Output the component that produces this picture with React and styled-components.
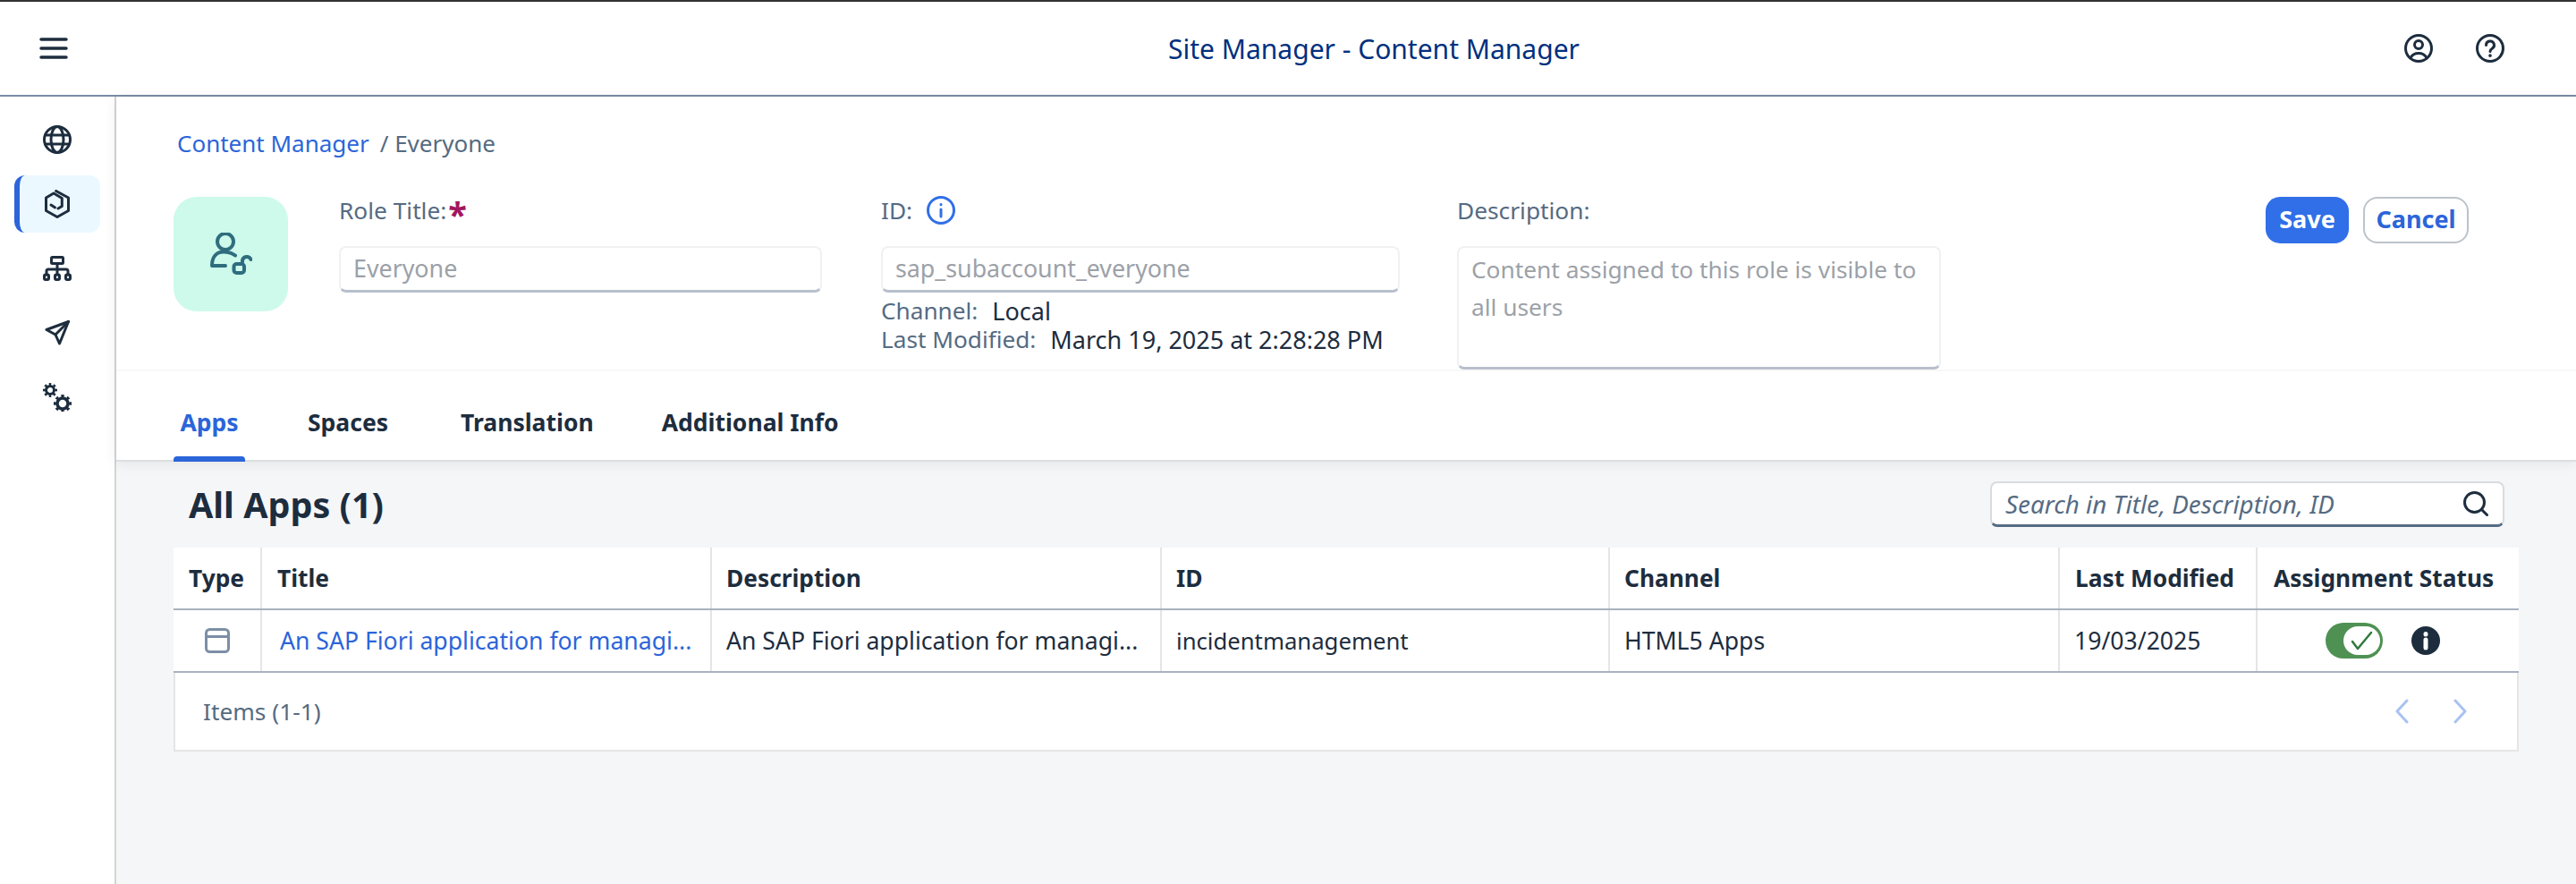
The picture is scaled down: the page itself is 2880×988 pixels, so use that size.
import styled, { createGlobalStyle } from 'styled-components'

const GlobalStyle = createGlobalStyle`
    html, body{
        margin: 0;
        padding: 0;
        background: #fff;
    }
    body{
        font-family: "Noto Sans", "Open Sans", sans-serif;
        color: #1d2d3e;
    }
    *{
        box-sizing: border-box;
    }
`

const Page = styled.div`
    width: 2880px;
    height: 988px;
    display: flex;
    flex-direction: column;
    overflow: hidden;
`

const TopBar = styled.header`
    height: 108px;
    flex: none;
    display: grid;
    grid-template-columns: 384px 1fr 192px;
    align-items: center;
    border-top: 2px solid #333;
    border-bottom: 2px solid #7a8ca6;
`

const MenuButton = styled.div`
    padding-left: 44px;
    display: flex;
`

const AppTitle = styled.h1`
    margin: 0;
    text-align: center;
    font-size: 30px;
    font-weight: 400;
    color: #00307e;
`

const TopActions = styled.div`
    display: flex;
    gap: 48px;
`

const Body = styled.div`
    flex: 1;
    display: flex;
    min-height: 0;
`

const SideNav = styled.nav`
    width: 130px;
    flex: none;
    border-right: 2px solid #d4d4d4;
    padding: 16px 16px 0;
    display: flex;
    flex-direction: column;
    gap: 8px;
`

const NavItem = styled.div`
    width: 96px;
    height: 64px;
    display: flex;
    align-items: center;
    justify-content: center;
    border-radius: 12px;
    background: ${p => p.$active ? '#ebf8ff' : 'transparent'};
    border-left: ${p => p.$active ? '6px solid #2b65d9' : '0'};
    padding-right: ${p => p.$active ? '6px' : '0'};
`

const Main = styled.main`
    flex: 1;
    display: flex;
    flex-direction: column;
    min-width: 0;
    background: #f5f6f7;
`

const Details = styled.section`
    background: #fff;
    border-bottom: 2px solid #dcdee0;
    box-shadow: 0 2px 14px rgba(0, 0, 0, .08);
    position: relative;
`

const Breadcrumb = styled.div`
    padding: 32px 64px 0 68px;
    height: 112px;
    font-size: 26px;
    line-height: 40px;
    color: #556b82;
    display: flex;
    gap: 12px;
`

const CrumbLink = styled.span`
    color: #2b65d9;
`

const HeadRow = styled.div`
    display: flex;
    padding: 0 120px 0 64px;
    height: 193px;
`

const Avatar = styled.div`
    width: 128px;
    height: 128px;
    flex: none;
    margin-right: 57px;
    border-radius: 26px;
    background: #cdfaeb;
    display: flex;
    align-items: center;
    justify-content: center;
`

const Field = styled.div`
    width: ${p => p.$width}px;
    margin-right: ${p => p.$gap}px;
    flex: none;
`

const Label = styled.label`
    height: 32px;
    display: flex;
    align-items: center;
    gap: 16px;
    margin-bottom: 23px;
    padding-bottom: 3px;
    font-size: 26.3px;
    color: #556b82;
`

const Required = styled.span`
    color: #a1175f;
    font-size: 38px;
    font-weight: 700;
    line-height: 32px;
    margin-left: -14px;
    padding-top: 8px;
`

const TextInput = styled.input`
    display: block;
    width: 100%;
    height: 52px;
    padding: 0 14px 3px;
    border: 2px solid #eff1f2;
    border-bottom: 3px solid #b9bfcc;
    border-radius: 8px;
    background: #fff;
    font: inherit;
    font-size: 26.8px;
    outline: none;
    &::placeholder{
        color: #9ca1a8;
        opacity: 1;
    }
`

const TextArea = styled.textarea`
    display: block;
    width: 100%;
    height: 138px;
    padding: 3px 14px;
    border: 2px solid #eff1f2;
    border-bottom: 3px solid #b9bfcc;
    border-radius: 8px;
    background: #fff;
    font: inherit;
    font-size: 26.3px;
    line-height: 42px;
    resize: none;
    outline: none;
    &::placeholder{
        color: #9ca1a8;
        opacity: 1;
    }
`

const Meta = styled.div`
    display: flex;
    gap: 16px;
    height: 32px;
    align-items: center;
    font-size: 27px;
    color: #1d2d3e;
    span:first-child{
        color: #556b82;
        font-size: 26.2px;
    }
`

const MetaList = styled.div`
    padding-top: 4px;
`

const Actions = styled.div`
    margin-left: auto;
    display: flex;
    gap: 16px;
`

const Button = styled.button`
    height: 52px;
    width: ${p => p.$primary ? 93 : 118}px;
    padding: 0 0 3px;
    border-radius: 16px;
    border: ${p => p.$primary ? '0' : '2px solid #bcc3ca'};
    background: ${p => p.$primary ? '#306fe8' : '#fff'};
    color: ${p => p.$primary ? '#fff' : '#2b65d9'};
    font: inherit;
    font-size: 27px;
    font-weight: 700;
`

const Tabs = styled.div`
    height: 101px;
    padding: 0 64px;
    border-top: 2px solid #f8f8f8;
    display: flex;
    gap: 64px;
`

const Tab = styled.div`
    position: relative;
    min-width: ${p => p.$min ?? 0}px;
    padding: 37px 6px 0;
    text-align: ${p => p.$active ? 'center' : 'left'};
    font-size: 26.5px;
    font-weight: 700;
    line-height: 40px;
    color: ${p => p.$active ? '#2b65d9' : '#1d2d3e'};
    ${p => p.$active && `
        &::after{
            content: "";
            position: absolute;
            left: 0;
            right: 0;
            bottom: -2px;
            height: 6px;
            border-radius: 4px 4px 0 0;
            background: #2b65d9;
        }
    `}
`

const Content = styled.section`
    padding: 22px 64px 0;
`

const Toolbar = styled.div`
    display: flex;
    justify-content: space-between;
    align-items: center;
    height: 51px;
    padding: 0 16px 0 17px;
    margin-bottom: 23px;
`

const SectionTitle = styled.h2`
    margin: 0;
    font-size: 39.5px;
    font-weight: 700;
    color: #1d2d3e;
`

const SearchBox = styled.div`
    width: 575px;
    height: 51px;
    padding: 0 16px 0 15px;
    display: flex;
    align-items: center;
    justify-content: space-between;
    background: #fff;
    border: 2px solid #d8dce1;
    border-bottom: 3px solid #556b82;
    border-radius: 8px;
    font-size: 27.8px;
    font-style: italic;
    color: #556b82;
`

const Table = styled.div`
    background: #fff;
`

const Row = styled.div`
    display: grid;
    grid-template-columns: 99px 503px 503px 501px 503px 221px 1fr;
    height: 70px;
    border-bottom: 2px solid #a8b2bf;
    font-size: ${p => p.$head ? 26.3 : 26.6}px;
    font-weight: ${p => p.$head ? 700 : 400};
`

const Cell = styled.div`
    display: flex;
    align-items: center;
    justify-content: ${p => p.$center ? 'center' : 'flex-start'};
    gap: ${p => p.$center ? '32px' : '0'};
    padding-left: ${p => p.$center ? 0 : (p.$pad ?? 16)}px;
    padding-right: ${p => p.$shift ?? 0}px;
    border-right: ${p => p.$last ? '0' : '2px solid #e5e5e5'};
    font-size: ${p => p.$size ? `${p.$size}px` : 'inherit'};
    white-space: nowrap;
    overflow: hidden;
`

const RowLink = styled.span`
    color: #2b65d9;
`

const TableFooter = styled.div`
    height: 88px;
    padding: 0 54px 0 31px;
    display: flex;
    align-items: center;
    justify-content: space-between;
    border: 2px solid #e5e5e5;
    border-top: 0;
    font-size: 26.3px;
    color: #556b82;
`

const Pager = styled.div`
    display: flex;
    gap: 44px;
`

const Toggle = styled.div`
    width: 64px;
    height: 40px;
    padding: 4px 3px;
    border-radius: 20px;
    background: #4f9153;
    display: flex;
    justify-content: flex-end;
`

const ToggleKnob = styled.div`
    width: 41px;
    height: 32px;
    border-radius: 16px;
    background: #fff;
    display: flex;
    align-items: center;
    justify-content: center;
`

const Line = { fill: 'none', stroke: '#1d2d3e', strokeWidth: 3, strokeLinecap: 'round', strokeLinejoin: 'round' }

function MenuIcon() {
    return (
        <svg width="32" height="24" viewBox="0 0 32 24" {...Line} strokeWidth="3.5">
            <path d="M2 2h28M2 12h28M2 22h28" />
        </svg>
    )
}

function UserIcon() {
    return (
        <svg width="32" height="32" viewBox="0 0 32 32" {...Line}>
            <circle cx="16" cy="16" r="14.5" />
            <circle cx="16" cy="12" r="4.5" />
            <path d="M7 26.500c2-3.500 5-5 9-5s7 1.500 9 5" />
        </svg>
    )
}

function HelpIcon() {
    return (
        <svg width="32" height="32" viewBox="0 0 32 32" {...Line}>
            <circle cx="16" cy="16" r="14.500" />
            <path d="M11.500 12.500a4.500 4.500 0 1 1 6.800 3.800c-1.500 1-2.300 1.700-2.300 3.200" />
            <path d="M16 24v.2" strokeWidth="3.500" />
        </svg>
    )
}

function GlobeIcon() {
    return (
        <svg width="32" height="32" viewBox="0 0 32 32" {...Line}>
            <circle cx="16" cy="16" r="14.500" />
            <ellipse cx="16" cy="16" rx="7" ry="14.500" />
            <path d="M2.500 11h27M2.500 21h27" />
        </svg>
    )
}

function ContentIcon() {
    return (
        <svg width="28" height="32" viewBox="0 0 28 32" {...Line}>
            <path d="M12.700 1.500 26.500 9v14.500L14 30.500 1.500 23.500V9L10 4l9.300 5.500v9L15 21" />
            <path d="M7 17l4.500 3" />
        </svg>
    )
}

function SitemapIcon() {
    return (
        <svg width="32" height="28" viewBox="0 0 32 28" {...Line}>
            <rect x="9.500" y="1.500" width="13" height="7" rx="1" />
            <path d="M16 8.500V21M4 21v-4a2 2 0 0 1 2-2h20a2 2 0 0 1 2 2V21" />
            <rect x="1.500" y="21" width="5" height="5.500" rx="1.500" />
            <rect x="13.500" y="21" width="5" height="5.500" rx="1.500" />
            <rect x="25.500" y="21" width="5" height="5.500" rx="1.500" />
        </svg>
    )
}

function SendIcon() {
    return (
        <svg width="28" height="28" viewBox="0 0 28 28" {...Line}>
            <path d="M26.500 1.500 2 10.500l10 5.500 4.500 10L26.500 1.500Z" />
            <path d="M26.500 1.500 12 16" />
        </svg>
    )
}

function GearsIcon() {
    return (
        <svg width="32" height="32" viewBox="0 0 32 32" fill="none" stroke="#1d2d3e">
            <circle cx="8" cy="8" r="4.500" strokeWidth="3" />
            <circle cx="8" cy="8" r="6.500" strokeWidth="3" pathLength="16" strokeDasharray="1 1" strokeDashoffset=".5" />
            <circle cx="22" cy="23" r="6" strokeWidth="3.500" />
            <circle cx="22" cy="23" r="8.500" strokeWidth="3" pathLength="16" strokeDasharray="1 1" strokeDashoffset=".5" />
        </svg>
    )
}

function RoleIcon() {
    return (
        <svg width="48" height="48" viewBox="0 0 48 48" {...Line} stroke="#2f6d7e" strokeWidth="4">
            <circle cx="18" cy="10" r="9" />
            <path d="M29 25.500c-4-3-7-4-13-4-9 0-13 6.500-13 15.500h15" />
            <rect x="27.500" y="35" width="11.500" height="10" rx="3" />
            <path d="M37 33v-2a5 5 0 0 1 9.500-1" />
        </svg>
    )
}

function InfoOutline() {
    return (
        <svg width="32" height="32" viewBox="0 0 32 32" fill="none" stroke="#306fe8" strokeWidth="3" strokeLinecap="round">
            <circle cx="16" cy="16" r="14.500" />
            <path d="M16 15v8M16 9.500v.2" />
        </svg>
    )
}

function InfoFilled() {
    return (
        <svg width="32" height="32" viewBox="0 0 32 32">
            <circle cx="16" cy="16" r="16" fill="#1d2d3e" />
            <path d="M16 15v9M16 8.500v.5" stroke="#fff" strokeWidth="5" strokeLinecap="round" fill="none" />
        </svg>
    )
}

function SearchIcon() {
    return (
        <svg width="28" height="28" viewBox="0 0 28 28" {...Line}>
            <circle cx="12.500" cy="12.500" r="11" />
            <path d="M20.500 20.500 26.500 26.500" />
        </svg>
    )
}

function AppTypeIcon() {
    return (
        <svg width="28" height="28" viewBox="0 0 28 28" {...Line} stroke="#7d8ea6">
            <rect x="1.500" y="1.500" width="25" height="25" rx="4" />
            <path d="M1.500 9.500h25" />
        </svg>
    )
}

function CheckIcon() {
    return (
        <svg width="26" height="22" viewBox="0 0 26 22" fill="none" stroke="#2f7a3c" strokeWidth="2.500" strokeLinecap="round" strokeLinejoin="round">
            <path d="M2 12l6 8L23 2" />
        </svg>
    )
}

function Chevron({ dir }) {
    return (
        <svg width="20" height="28" viewBox="0 0 20 28" fill="none" stroke="#a9c2f2" strokeWidth="3" strokeLinecap="round" strokeLinejoin="round">
            <path d={dir === 'left' ? 'M15 2 4 14l11 12' : 'M5 2l11 12L5 26'} />
        </svg>
    )
}

function App() {
    return (
        <Page>
            <GlobalStyle />
            <TopBar>
                <MenuButton><MenuIcon /></MenuButton>
                <AppTitle>Site Manager - Content Manager</AppTitle>
                <TopActions>
                    <UserIcon />
                    <HelpIcon />
                </TopActions>
            </TopBar>
            <Body>
                <SideNav>
                    <NavItem><GlobeIcon /></NavItem>
                    <NavItem $active><ContentIcon /></NavItem>
                    <NavItem><SitemapIcon /></NavItem>
                    <NavItem><SendIcon /></NavItem>
                    <NavItem><GearsIcon /></NavItem>
                </SideNav>
                <Main>
                    <Details>
                        <Breadcrumb>
                            <CrumbLink>Content Manager</CrumbLink>
                            <span>/ Everyone</span>
                        </Breadcrumb>
                        <HeadRow>
                            <Avatar><RoleIcon /></Avatar>
                            <Field $width={540} $gap={66}>
                                <Label>Role Title:<Required>*</Required></Label>
                                <TextInput placeholder="Everyone" readOnly />
                            </Field>
                            <Field $width={580} $gap={64}>
                                <Label>ID: <InfoOutline /></Label>
                                <TextInput placeholder="sap_subaccount_everyone" readOnly />
                                <MetaList>
                                    <Meta><span>Channel:</span><span>Local</span></Meta>
                                    <Meta><span>Last Modified:</span><span>March 19, 2025 at 2:28:28 PM</span></Meta>
                                </MetaList>
                            </Field>
                            <Field $width={541} $gap={0}>
                                <Label>Description:</Label>
                                <TextArea placeholder="Content assigned to this role is visible to all users" readOnly />
                            </Field>
                            <Actions>
                                <Button $primary>Save</Button>
                                <Button>Cancel</Button>
                            </Actions>
                        </HeadRow>
                        <Tabs>
                            <Tab $active $min={80}>Apps</Tab>
                            <Tab $min={107}>Spaces</Tab>
                            <Tab>Translation</Tab>
                            <Tab>Additional Info</Tab>
                        </Tabs>
                    </Details>
                    <Content>
                        <Toolbar>
                            <SectionTitle>All Apps (1)</SectionTitle>
                            <SearchBox>
                                <span>Search in Title, Description, ID</span>
                                <SearchIcon />
                            </SearchBox>
                        </Toolbar>
                        <Table>
                            <Row $head>
                                <Cell $pad={17}>Type</Cell>
                                <Cell $pad={17}>Title</Cell>
                                <Cell>Description</Cell>
                                <Cell>ID</Cell>
                                <Cell>Channel</Cell>
                                <Cell $pad={17}>Last Modified</Cell>
                                <Cell $last $pad={18}>Assignment Status</Cell>
                            </Row>
                            <Row>
                                <Cell $center><AppTypeIcon /></Cell>
                                <Cell $pad={20}><RowLink>An SAP Fiori application for managi...</RowLink></Cell>
                                <Cell>An SAP Fiori application for managi...</Cell>
                                <Cell $size={25.7}>incidentmanagement</Cell>
                                <Cell>HTML5 Apps</Cell>
                                <Cell>19/03/2025</Cell>
                                <Cell $center $last $shift={12}>
                                    <Toggle><ToggleKnob><CheckIcon /></ToggleKnob></Toggle>
                                    <InfoFilled />
                                </Cell>
                            </Row>
                            <TableFooter>
                                <span>Items (1-1)</span>
                                <Pager>
                                    <Chevron dir="left" />
                                    <Chevron dir="right" />
                                </Pager>
                            </TableFooter>
                        </Table>
                    </Content>
                </Main>
            </Body>
        </Page>
    )
}

export default App
